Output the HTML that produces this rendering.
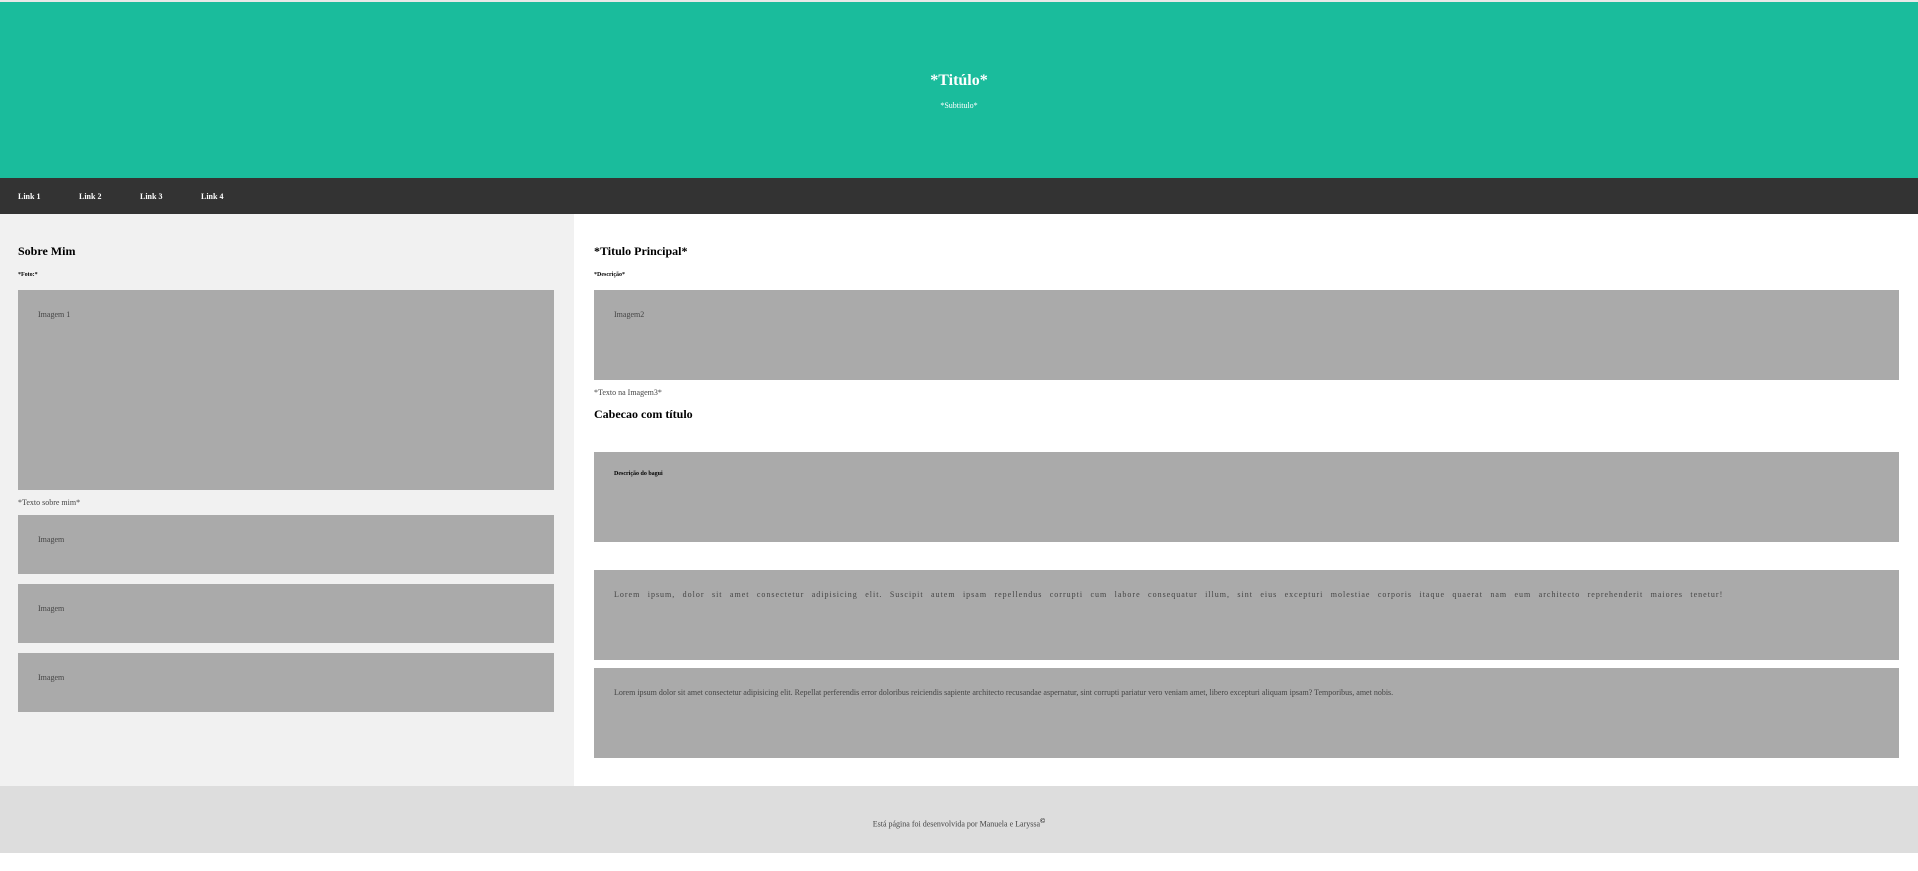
<!DOCTYPE html>
<html><head><meta charset="utf-8"><style>
body{margin:0;width:1918px;height:871px;position:relative;font-family:"Liberation Serif",serif;background:#fff;overflow:hidden}
div{position:absolute;box-sizing:border-box}
.g{background:#aaa}
.t{font-size:8px;color:#444;white-space:nowrap}
.l{font-size:8px;letter-spacing:1px;word-spacing:4.4px;color:#444;white-space:nowrap}
</style></head><body>
<div style="left:0;top:0;width:1918px;height:2px;background:#e8e8e8"></div>
<div style="left:0;top:2px;width:1918px;height:176px;background:#1abc9c;color:#fff;text-align:center">
<div style="left:0;width:100%;top:70px;font-size:16px;font-weight:bold">*Titúlo*</div>
<div style="left:0;width:100%;top:99px;font-size:8px">*Subtitulo*</div>
</div>
<div style="left:0;top:178px;width:1918px;height:36px;background:#333;color:#fff;font-size:8px;font-weight:bold">
<div style="left:18px;top:14px">Link 1</div><div style="left:79px;top:14px">Link 2</div><div style="left:140px;top:14px">Link 3</div><div style="left:201px;top:14px">Link 4</div>
</div>
<div style="left:0;top:214px;width:574px;height:572px;background:#f1f1f1"></div>
<div style="left:18px;top:244px;font-size:12px;font-weight:bold">Sobre Mim</div>
<div style="left:18px;top:272px;font-size:6px;font-weight:bold">*Foto:*</div>
<div class="g" style="left:18px;top:290px;width:536px;height:200px"><div class="t" style="left:20px;top:20px">Imagem 1</div></div>
<div class="t" style="left:18px;top:498px">*Texto sobre mim*</div>
<div class="g" style="left:18px;top:515px;width:536px;height:59px"><div class="t" style="left:20px;top:20px">Imagem</div></div>
<div class="g" style="left:18px;top:584px;width:536px;height:59px"><div class="t" style="left:20px;top:20px">Imagem</div></div>
<div class="g" style="left:18px;top:653px;width:536px;height:59px"><div class="t" style="left:20px;top:20px">Imagem</div></div>
<div style="left:594px;top:244px;font-size:12px;font-weight:bold">*Titulo Principal*</div>
<div style="left:594px;top:272px;font-size:6px;font-weight:bold">*Descrição*</div>
<div class="g" style="left:594px;top:290px;width:1305px;height:90px"><div class="t" style="left:20px;top:20px">Imagem2</div></div>
<div class="t" style="left:594px;top:388px">*Texto na Imagem3*</div>
<div style="left:594px;top:407px;font-size:12px;font-weight:bold">Cabecao com título</div>
<div class="g" style="left:594px;top:452px;width:1305px;height:90px"><div style="left:20px;top:19px;font-size:6px;font-weight:bold;white-space:nowrap">Descrição do bagui</div></div>
<div class="g" style="left:594px;top:570px;width:1305px;height:90px"><div class="l" style="left:20px;top:20px">Lorem ipsum, dolor sit amet consectetur adipisicing elit. Suscipit autem ipsam repellendus corrupti cum labore consequatur illum, sint eius excepturi molestiae corporis itaque quaerat nam eum architecto reprehenderit maiores tenetur!</div></div>
<div class="g" style="left:594px;top:668px;width:1305px;height:90px"><div class="t" style="left:20px;top:20px">Lorem ipsum dolor sit amet consectetur adipisicing elit. Repellat perferendis error doloribus reiciendis sapiente architecto recusandae aspernatur, sint corrupti pariatur vero veniam amet, libero excepturi aliquam ipsam? Temporibus, amet nobis.</div></div>
<div style="left:0;top:786px;width:1918px;height:67px;background:#ddd"><div class="t" style="left:0;width:100%;text-align:center;top:31px">Está página foi desenvolvida por Manuela e Laryssa<sup style="font-size:7px;color:#000;font-weight:bold">©</sup></div></div>
</body></html>
